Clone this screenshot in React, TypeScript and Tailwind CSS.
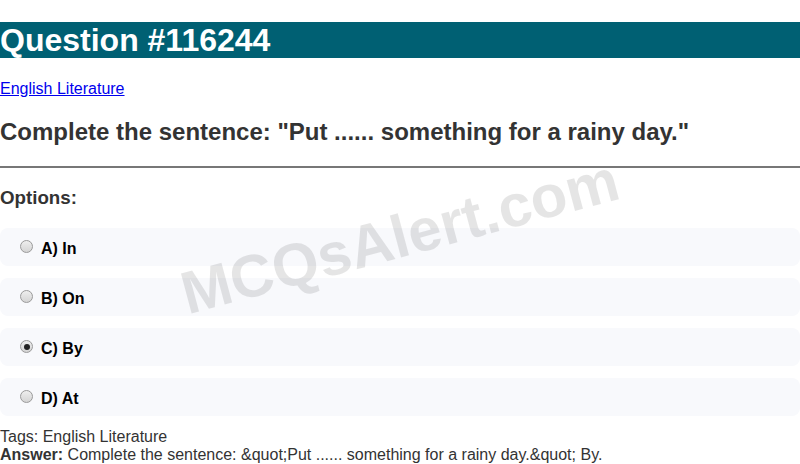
import React from "react";

const options = [
  { key: "A", text: "In", checked: false },
  { key: "B", text: "On", checked: false },
  { key: "C", text: "By", checked: true },
  { key: "D", text: "At", checked: false },
];

function Radio({ checked }: { checked: boolean }) {
  return (
    <span className="ml-[5px] mr-[3px] inline-flex h-[13px] w-[13px] shrink-0 items-center justify-center rounded-full border border-[#9a9a9a] bg-gradient-to-b from-[#eeeeee] to-[#d4d4d4]">
      {checked && <span className="h-[6px] w-[6px] rounded-full bg-[#222]" />}
    </span>
  );
}

export default function App() {
  return (
    <div className="relative overflow-hidden bg-white font-['Liberation_Sans',Arial,sans-serif] text-black">
      <h1 className="my-[22px] bg-[#006073] text-[32px] font-bold leading-[36px] text-white">
        Question #116244
      </h1>
      <div className="leading-[18px]">
        <a href="#" className="text-[16px] text-[#0000ee] underline">
          English Literature
        </a>
      </div>
      <h2 className="mt-[20px] mb-[20px] text-[24px] font-bold leading-[28px] text-[#333]">
        Complete the sentence: "Put ...... something for a rainy day."
      </h2>
      <hr className="border-0 border-t-2 border-[#777]" />
      <h3 className="my-[19px] text-[18.72px] font-bold leading-[22px] text-[#333]">
        Options:
      </h3>
      <div className="flex flex-col gap-[12px]">
        {options.map((o) => (
          <div
            key={o.key}
            className="flex h-[38px] items-start rounded-lg bg-[#f8f9fc] px-[15px] pt-[12px]"
          >
            <Radio checked={o.checked} />
            <span className="ml-[5px] text-[16px] font-bold leading-[18px]">
              {o.key}) {o.text}
            </span>
          </div>
        ))}
      </div>
      <div className="mt-[12px] text-[16px] leading-[18px] text-[#333]">
        <div>Tags: English Literature</div>
        <div>
          <span className="font-bold">Answer:</span> Complete the sentence:
          &amp;quot;Put ...... something for a rainy day.&amp;quot; By.
        </div>
      </div>
      <div className="pointer-events-none absolute left-[400px] top-[237px] -translate-x-1/2 -translate-y-1/2 -rotate-[15deg] whitespace-nowrap text-[60px] font-bold text-black/10">
        MCQsAlert.com
      </div>
    </div>
  );
}
